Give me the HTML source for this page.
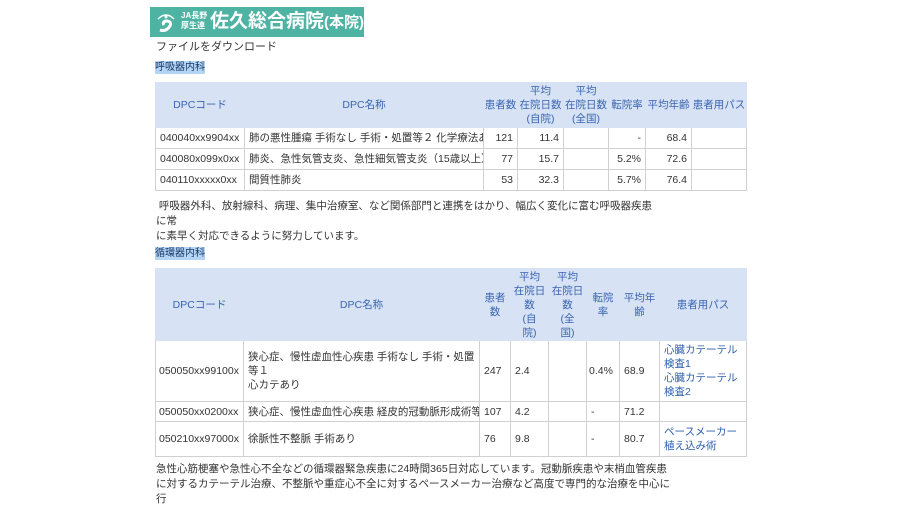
<!DOCTYPE html>
<html><head><meta charset="utf-8"><style>
body{margin:0;width:900px;height:506px;background:#fff;font-family:"Liberation Sans","Noto Sans CJK JP",sans-serif;font-size:10.5px;color:#333;position:relative;overflow:hidden}
.abs{position:absolute}
.logo{left:150px;top:7px;width:214px;height:30px;background:#4fb3a3;color:#fff}
.hl{background:#b3d4f2;color:#1a3a6a}
table{position:absolute;border-collapse:collapse;table-layout:fixed}
td,th{border:1px solid #d0d0d0;padding:0 4px;font-weight:normal;line-height:14px}
th{background:#d7e3f5;color:#3a64b0;text-align:center;border-color:#d7e3f5}
td.r{text-align:right}
a{color:#2d5fae;text-decoration:none}
p{margin:0;position:absolute;line-height:15px}
</style></head><body>
<div class="abs logo">
<svg class="abs" style="left:4px;top:3px" width="24" height="24" viewBox="0 0 24 24"><path d="M4 9 Q12 1 20 9" fill="none" stroke="#fff" stroke-width="1.5"/><circle cx="12" cy="7" r="1.5" fill="#fff"/><path d="M6 20 Q12 22 16 16 Q18 11 12 11 Q8 12 10 15" fill="none" stroke="#fff" stroke-width="3"/></svg>
<div class="abs" style="left:31px;top:4px;font-size:8px;line-height:10px;font-weight:bold">JA長野<br>厚生連</div>
<div class="abs" style="left:60px;top:3px;font-size:19px;font-weight:bold;line-height:24px;white-space:nowrap">佐久総合病院<span style="font-size:15px">(本院)</span></div>
</div>
<p style="left:156px;top:40px;font-size:11px">ファイルをダウンロード</p>
<p class="hl" style="left:155px;top:61px;font-size:10px;line-height:13px">呼吸器内科</p>

<table style="left:155px;top:82px;width:591px">
<colgroup><col style="width:89px"><col style="width:239px"><col style="width:34px"><col style="width:46px"><col style="width:45px"><col style="width:37px"><col style="width:46px"><col style="width:55px"></colgroup>
<tr style="height:45px"><th>DPCコード</th><th>DPC名称</th><th style="padding:0">患者数</th><th style="padding:0">平均<br>在院日数<br>(自院)</th><th style="padding:0">平均<br>在院日数<br>(全国)</th><th style="padding:0">転院率</th><th style="padding:0">平均年齢</th><th style="padding:0">患者用パス</th></tr>
<tr style="height:21px"><td>040040xx9904xx</td><td style="white-space:nowrap;overflow:hidden">肺の悪性腫瘍 手術なし 手術・処置等２ 化学療法あり</td><td class="r">121</td><td class="r">11.4</td><td></td><td class="r">-</td><td class="r">68.4</td><td></td></tr>
<tr style="height:21px"><td>040080x099x0xx</td><td style="white-space:nowrap;overflow:hidden">肺炎、急性気管支炎、急性細気管支炎（15歳以上）</td><td class="r">77</td><td class="r">15.7</td><td></td><td class="r">5.2%</td><td class="r">72.6</td><td></td></tr>
<tr style="height:21px"><td>040110xxxxx0xx</td><td>間質性肺炎</td><td class="r">53</td><td class="r">32.3</td><td></td><td class="r">5.7%</td><td class="r">76.4</td><td></td></tr>
</table>

<p style="left:156px;top:199px;width:500px">&nbsp;呼吸器外科、放射線科、病理、集中治療室、など関係部門と連携をはかり、幅広く変化に富む呼吸器疾患に常<br>に素早く対応できるように努力しています。</p>
<p class="hl" style="left:155px;top:247px;font-size:10px;line-height:13px">循環器内科</p>

<table style="left:155px;top:268px;width:591px">
<colgroup><col style="width:88px"><col style="width:236px"><col style="width:31px"><col style="width:38px"><col style="width:38px"><col style="width:33px"><col style="width:40px"><col style="width:87px"></colgroup>
<tr style="height:72px"><th>DPCコード</th><th>DPC名称</th><th style="padding:0">患者<br>数</th><th style="padding:0">平均<br>在院日<br>数<br>(自<br>院)</th><th style="padding:0">平均<br>在院日<br>数<br>(全<br>国)</th><th style="padding:0">転院<br>率</th><th style="padding:0">平均年<br>齢</th><th>患者用パス</th></tr>
<tr style="height:61px"><td style="padding:0 3px">050050xx99100x</td><td>狭心症、慢性虚血性心疾患 手術なし 手術・処置等１<br>心カテあり</td><td>247</td><td>2.4</td><td></td><td style="padding:0 2px">0.4%</td><td>68.9</td><td><a>心臓カテーテル検査1<br>心臓カテーテル検査2</a></td></tr>
<tr style="height:20px"><td style="padding:0 3px">050050xx0200xx</td><td style="white-space:nowrap;overflow:hidden">狭心症、慢性虚血性心疾患 経皮的冠動脈形成術等</td><td>107</td><td>4.2</td><td></td><td>-</td><td>71.2</td><td></td></tr>
<tr style="height:35px"><td style="padding:0 3px">050210xx97000x</td><td>徐脈性不整脈 手術あり</td><td>76</td><td>9.8</td><td></td><td>-</td><td>80.7</td><td><a>ペースメーカー植え込み術</a></td></tr>
</table>

<p style="left:156px;top:462px;width:520px">急性心筋梗塞や急性心不全などの循環器緊急疾患に24時間365日対応しています。冠動脈疾患や末梢血管疾患<br>に対するカテーテル治療、不整脈や重症心不全に対するペースメーカー治療など高度で専門的な治療を中心に行</p>
</body></html>
